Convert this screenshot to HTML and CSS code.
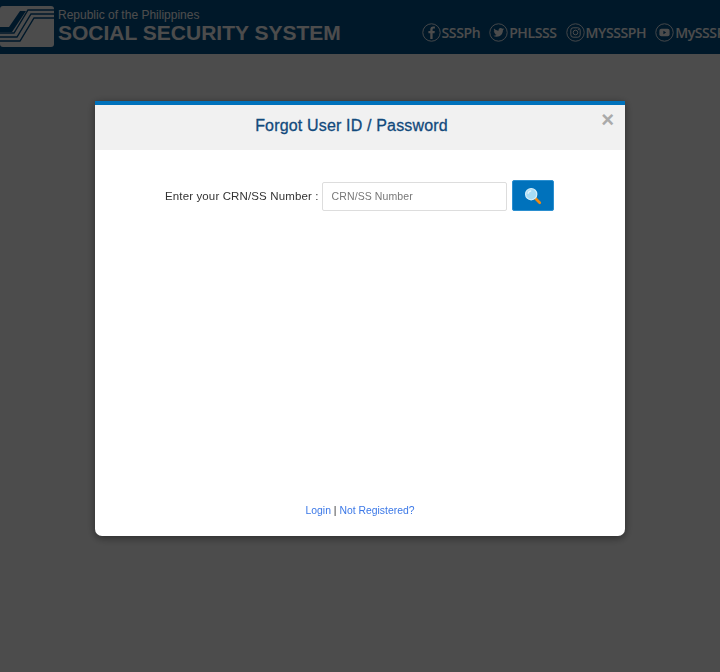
FILE: index.html
```html
<!DOCTYPE html>
<html lang="en">
<head>
  <meta charset="UTF-8" />
  <meta name="viewport" content="width=device-width, initial-scale=1.0">
  <title>Forgot User ID / Password</title>
  <link rel="stylesheet" href="styles.css">
</head>
<body>
  <header class="topbar">
    <div class="brand">
      <svg class="brand-logo" width="55" height="42" viewBox="0 0 55 42">
        <rect x="0" y="0" width="54" height="41" rx="3" fill="#fff"/>
        <g fill="none" stroke="#00508a" stroke-width="1.4">
          <path d="M54 4H28L14 27H0"/>
          <path d="M54 8H31L17 31H0"/>
          <path d="M54 12H34L20 35H0"/>
        </g>
        <path d="M20 5H26L12 26H0V21H9Z" fill="#00508a"/>
      </svg>
      <div class="brand-text">
        <div class="brand-small">Republic of the Philippines</div>
        <div class="brand-big">SOCIAL SECURITY SYSTEM</div>
      </div>
    </div>
    <nav class="social">
      <a class="social-item">
        <svg width="19" height="19" viewBox="0 0 19 19"><circle cx="9.5" cy="9.5" r="8.7" fill="none" stroke="#fff" stroke-width="0.9"/><path d="M10.6 16V10.2H12.5L12.8 8H10.6V6.7C10.6 6 10.8 5.6 11.7 5.6H12.9V3.6C12.6 3.6 12 3.5 11.2 3.5 9.5 3.5 8.3 4.6 8.3 6.4V8H6.4V10.2H8.3V16Z" fill="#fff"/></svg>
        SSSPh
      </a>
      <a class="social-item">
        <svg width="19" height="19" viewBox="0 0 19 19"><circle cx="9.5" cy="9.5" r="8.7" fill="none" stroke="#fff" stroke-width="0.9"/><path d="M15 6.1C14.6 6.3 14.2 6.4 13.7 6.5 14.2 6.2 14.5 5.8 14.7 5.3 14.3 5.5 13.8 5.7 13.3 5.8 12.9 5.4 12.3 5.1 11.7 5.1 10.3 5.1 9.3 6.4 9.6 7.8 7.8 7.7 6.2 6.8 5.1 5.5 4.6 6.5 4.9 7.7 5.8 8.3 5.4 8.3 5.1 8.2 4.8 8 4.8 9.1 5.5 10 6.6 10.2 6.3 10.3 5.9 10.3 5.6 10.3 5.9 11.2 6.7 11.8 7.7 11.8 6.7 12.5 5.5 12.9 4.3 12.7 5.3 13.4 6.5 13.8 7.7 13.8 11.7 13.8 14 10.4 13.9 7.3 14.3 7 14.7 6.6 15 6.1Z" fill="#fff"/></svg>
        PHLSSS
      </a>
      <a class="social-item">
        <svg width="19" height="19" viewBox="0 0 19 19"><circle cx="9.5" cy="9.5" r="8.7" fill="none" stroke="#fff" stroke-width="0.9"/><rect x="4.8" y="4.8" width="9.4" height="9.4" rx="2.4" fill="none" stroke="#fff" stroke-width="1"/><circle cx="9.5" cy="9.5" r="2.3" fill="none" stroke="#fff" stroke-width="1"/><circle cx="12.4" cy="6.6" r="0.6" fill="#fff"/></svg>
        MYSSSPH
      </a>
      <a class="social-item">
        <svg width="19" height="19" viewBox="0 0 19 19"><circle cx="9.5" cy="9.5" r="8.7" fill="none" stroke="#fff" stroke-width="0.9"/><rect x="4.4" y="5.8" width="10.2" height="7.4" rx="2" fill="#fff"/><path d="M8.4 7.8V11.2L11.2 9.5Z" fill="#00508a"/></svg>
        MySSSPH
      </a>
    </nav>
  </header>

  <div class="backdrop">
    <div class="modal">
      <div class="modal-head">
        <h1>Forgot User ID / Password</h1>
        <span class="close">&times;</span>
      </div>
      <div class="modal-body">
        <form class="lookup">
          <label for="crn">Enter your CRN/SS Number :</label>
          <input type="text" id="crn" placeholder="CRN/SS Number" />
          <button type="button" class="search-btn" aria-label="Search">
            <svg width="18" height="18" viewBox="0 0 20 20">
              <path d="M12 12L17.5 17.5" stroke="#f08a12" stroke-width="3" stroke-linecap="round"/>
              <circle cx="8" cy="8" r="6.2" fill="#a8dcf5" stroke="#d5eef9" stroke-width="1.4"/>
              <path d="M4.5 7.5A3.6 3.6 0 0 1 8 4.2" fill="none" stroke="#e6f6fd" stroke-width="1.4"/>
            </svg>
          </button>
        </form>
        <p class="links"><a href="#">Login</a> | <a href="#">Not Registered?</a></p>
      </div>
    </div>
  </div>
</body>
</html>
```
FILE: styles.css
```css
* {
  margin: 0;
  padding: 0;
  box-sizing: border-box;
}

html, body {
  height: 100%;
  overflow: hidden;
}

body {
  font-family: "Liberation Sans", Arial, sans-serif;
  background: #fff;
}

.topbar {
  height: 54px;
  background: #00508a;
  color: #fff;
  display: flex;
  justify-content: space-between;
  white-space: nowrap;
  overflow: hidden;
}

.brand {
  display: flex;
  align-items: flex-start;
  padding-top: 6px;
}

.brand-logo {
  flex: none;
}

.brand-text {
  margin-left: 3px;
  padding-top: 3px;
}

.brand-small {
  font-size: 12px;
  line-height: 13px;
}

.brand-big {
  font-size: 21px;
  line-height: 22px;
  font-weight: bold;
}

.social {
  display: flex;
  gap: 9px;
  padding-top: 23px;
  margin-right: -15px;
  flex: none;
}

.social-item {
  display: flex;
  align-items: center;
  gap: 1px;
  height: 19px;
  font-family: "Open Sans", sans-serif;
  font-size: 14px;
  font-weight: 600;
  letter-spacing: -0.4px;
}

.backdrop {
  position: fixed;
  top: 0;
  left: 0;
  right: 0;
  bottom: 0;
  background: rgba(0, 0, 0, 0.7);
  padding-top: 101px;
}

.modal {
  width: 530px;
  height: 435px;
  margin: 0 auto;
  background: #fff;
  border-top: 4px solid #0072bc;
  border-radius: 0 0 7px 7px;
  box-shadow: 0 2px 8px rgba(0, 0, 0, 0.45);
  display: flex;
  flex-direction: column;
}

.modal-head {
  position: relative;
  height: 45px;
  background: #f1f1f1;
  display: flex;
  align-items: center;
  justify-content: center;
  padding: 0 17px 4px 0;
}

h1 {
  font-size: 16px;
  font-weight: normal;
  letter-spacing: 0.17px;
  color: #124a7c;
  -webkit-text-stroke: 0.3px #124a7c;
}

.close {
  position: absolute;
  top: 4px;
  right: 11px;
  font-size: 22px;
  line-height: 22px;
  font-weight: bold;
  color: #aaa;
}

.modal-body {
  flex: 1;
  display: flex;
  flex-direction: column;
  justify-content: space-between;
  padding: 30px 0 20px;
}

.lookup {
  display: flex;
  align-items: center;
  padding-left: 70px;
}

label {
  font-size: 11.5px;
  letter-spacing: 0.13px;
  color: #333;
  margin-right: 3px;
}

input {
  width: 185px;
  height: 29px;
  padding: 0 8px 2px 9px;
  border: 1px solid #ddd;
  border-radius: 2px;
  font: 10.5px "Liberation Sans", Arial, sans-serif;
  letter-spacing: 0.1px;
  margin-top: 2px;
}

input::placeholder {
  color: #777;
}

.search-btn {
  width: 42px;
  height: 31px;
  margin-left: 5px;
  background: #0072bc;
  border: 1px solid #2b8fd0;
  border-radius: 2px;
  display: flex;
  align-items: center;
  justify-content: center;
}

.links {
  text-align: center;
  font-size: 10.4px;
  color: #333;
}

.links a {
  color: #3b78e7;
  text-decoration: none;
}
```
